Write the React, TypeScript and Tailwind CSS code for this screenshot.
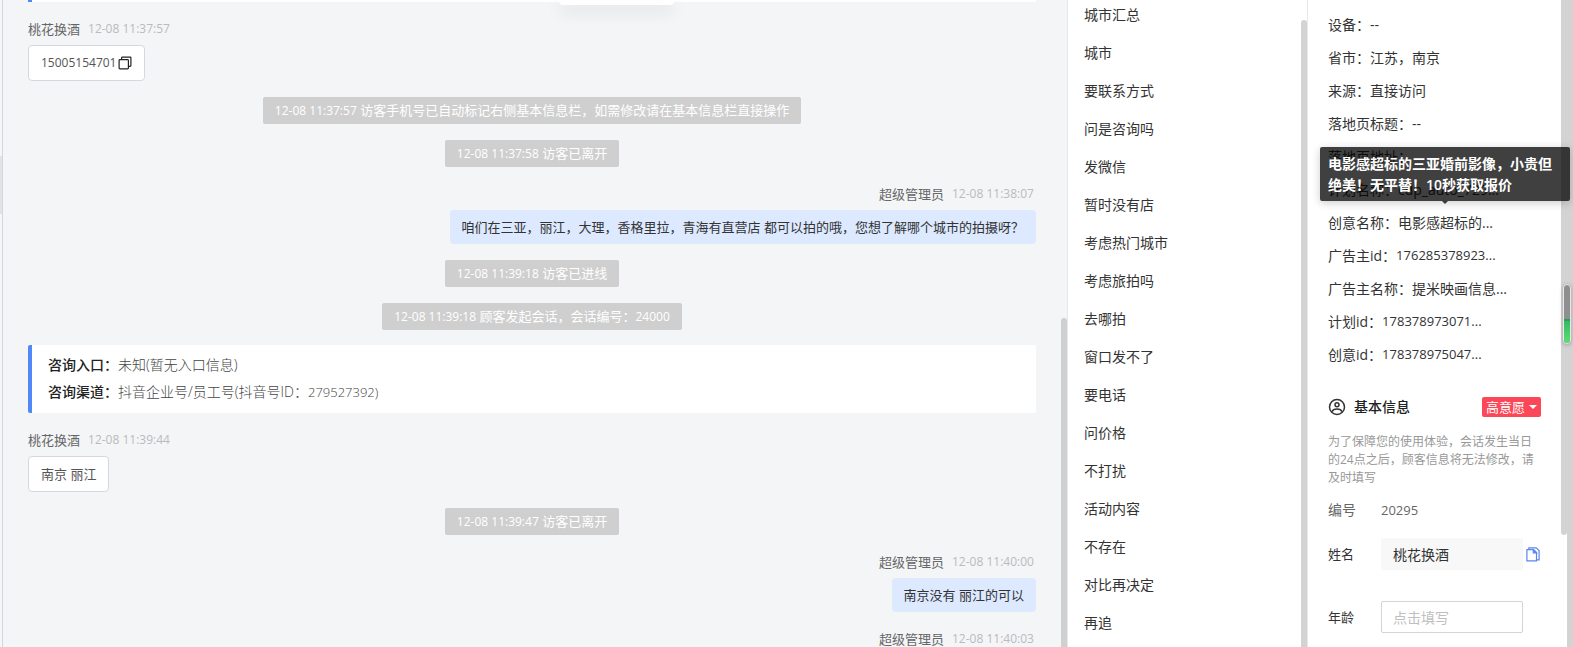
import { Fragment } from "react";

type ChatItem =
  | { kind: "notice"; time: string; text: string; number?: string }
  | { kind: "entry" }
  | { kind: "message"; from: "visitor" | "admin"; name: string; time: string; text?: string; phone?: string };

const chatItems: ChatItem[] = [
  { kind: "message", from: "visitor", name: "桃花换酒", time: "12-08 11:37:57", phone: "15005154701" },
  {
    kind: "notice",
    time: "12-08 11:37:57",
    text: "访客手机号已自动标记右侧基本信息栏，如需修改请在基本信息栏直接操作",
  },
  { kind: "notice", time: "12-08 11:37:58", text: "访客已离开" },
  {
    kind: "message",
    from: "admin",
    name: "超级管理员",
    time: "12-08 11:38:07",
    text: "咱们在三亚，丽江，大理，香格里拉，青海有直营店 都可以拍的哦，您想了解哪个城市的拍摄呀？",
  },
  { kind: "notice", time: "12-08 11:39:18", text: "访客已进线" },
  { kind: "notice", time: "12-08 11:39:18", text: "顾客发起会话，会话编号：", number: "24000" },
  { kind: "entry" },
  { kind: "message", from: "visitor", name: "桃花换酒", time: "12-08 11:39:44", text: "南京 丽江" },
  { kind: "notice", time: "12-08 11:39:47", text: "访客已离开" },
  { kind: "message", from: "admin", name: "超级管理员", time: "12-08 11:40:00", text: "南京没有 丽江的可以" },
  { kind: "message", from: "admin", name: "超级管理员", time: "12-08 11:40:03" },
];

const quickReplies = [
  "城市汇总",
  "城市",
  "要联系方式",
  "问是咨询吗",
  "发微信",
  "暂时没有店",
  "考虑热门城市",
  "考虑旅拍吗",
  "去哪拍",
  "窗口发不了",
  "要电话",
  "问价格",
  "不打扰",
  "活动内容",
  "不存在",
  "对比再决定",
  "再追",
];

const visitInfo = [
  { label: "设备", value: "--" },
  { label: "省市", value: "江苏，南京" },
  { label: "来源", value: "直接访问" },
  { label: "落地页标题", value: "--" },
  { label: "落地页地址", value: "" },
  { label: "计划名称", value: "cdp_auto_729..." },
  {
    label: "创意名称",
    value: "电影感超标的...",
    tip: "电影感超标的三亚婚前影像，小贵但绝美！无平替！10秒获取报价",
  },
  { label: "广告主id", value: "176285378923...", numeric: true },
  { label: "广告主名称", value: "提米映画信息..." },
  { label: "计划id", value: "178378973071...", numeric: true },
  { label: "创意id", value: "178378975047...", numeric: true },
];

function CopyIcon() {
  return (
    <svg width="14" height="14" viewBox="0 0 14 14" fill="none" stroke="#222" strokeWidth="1.2">
      <rect x="1.1" y="3.6" width="9.3" height="9.3" rx="0.8" />
      <path d="M3.6 3.4V1.9c0-.5.3-.8.8-.8h7.7c.5 0 .8.3.8.8v7.7c0 .5-.3.8-.8.8h-1.5" />
    </svg>
  );
}

function PagesIcon() {
  return (
    <svg width="14" height="15" viewBox="0 0 14 15" fill="none" stroke="#5b86f0" strokeWidth="1.2">
      <path d="M.9 2.6h6.6l3 3v8.3H.9z" />
      <path d="M7.3 2.6v3.2h3.2z" fill="#5b86f0" />
      <path d="M2.8 2.4V.9h7.4l2.9 2.6v9.4h-2.4" />
    </svg>
  );
}

function UserIcon() {
  return (
    <svg width="18" height="18" viewBox="0 0 18 18" fill="none" stroke="#333" strokeWidth="1.5">
      <circle cx="9" cy="9" r="7.5" />
      <circle cx="9" cy="6.8" r="2" />
      <path d="M4 13.600c.7-1.700 2.600-2.500 5-2.500s4.300.8 5 2.500" />
    </svg>
  );
}

function Notice({ time, text, number }: { time: string; text: string; number?: string }) {
  return (
    <div className="h-[27px] self-center rounded-[2px] bg-[#cfcfd0] px-3 leading-[27px] text-white">
      <time className="text-xs leading-none">{time}</time> {text}
      {number && <span className="text-xs leading-none">{number}</span>}
    </div>
  );
}

function EntryCard() {
  return (
    <div className="-mt-px rounded-[2px] border-l-4 border-[#5088f7] bg-white pt-[6px] pb-[7px] pl-4 text-sm leading-[27px] text-[#444]">
      <p>
        <b className="font-medium text-[#222]">咨询入口：</b>
        <span className="font-light">未知(暂无入口信息)</span>
      </p>
      <p>
        <b className="font-medium text-[#222]">咨询渠道：</b>
        <span className="font-light">
          抖音企业号/员工号(抖音号ID：<span className="text-[13px]">279527392)</span>
        </span>
      </p>
    </div>
  );
}

function Message({ item }: { item: Extract<ChatItem, { kind: "message" }> }) {
  const isAdmin = item.from === "admin";
  return (
    <div className={isAdmin ? "flex flex-col items-end" : "flex flex-col items-start"}>
      <div className="mb-[5px] flex h-[22px] items-center gap-2 text-[#666]">
        <span>{item.name}</span>
        <time className="w-[84px] text-xs text-[#bbb]">{item.time}</time>
      </div>
      {isAdmin && item.text && (
        <div className="rounded bg-[#dce9ff] px-3 leading-[34px] text-[#333]">{item.text}</div>
      )}
      {!isAdmin && (
        <div className="flex items-center gap-0.5 rounded border border-[#d5d8e0] bg-white px-3 leading-[34px] text-[#555]">
          {item.phone ? (
            <>
              <span className="text-xs leading-[34px]">{item.phone}</span>
              <button type="button" aria-label="复制">
                <CopyIcon />
              </button>
            </>
          ) : (
            item.text
          )}
        </div>
      )}
    </div>
  );
}

export default function App() {
  return (
    <div className="flex h-screen overflow-hidden bg-white font-['Open_Sans','Noto_Sans_CJK_SC',sans-serif] text-sm text-[#333]">
      {/* collapsed session list */}
      <div className="w-[3px] shrink-0 border-r border-[#d3d6dc] bg-[#f5f6f8] pt-[156px]">
        <div className="h-[58px] bg-[#e2e3e5]" />
      </div>

      {/* conversation */}
      <main className="relative flex min-w-0 flex-1 bg-[#f3f5f7] text-[13px]">
        <div className="absolute left-[556px] top-0 h-[5px] w-[115px] rounded-b bg-white shadow-[0_6px_16px_rgba(0,0,0,0.14)]" />
        <div className="flex min-w-0 flex-1 flex-col gap-4 px-[25px]">
          <div className="h-[2px] shrink-0 border-l-4 border-[#5088f7] bg-white" />
          {chatItems.map((item, i) => (
            <Fragment key={i}>
              {item.kind === "notice" && <Notice time={item.time} text={item.text} number={item.number} />}
              {item.kind === "entry" && <EntryCard />}
              {item.kind === "message" && <Message item={item} />}
            </Fragment>
          ))}
        </div>
        <div className="w-[6px] shrink-0 pt-[318px]">
          <div className="h-full rounded-t-full bg-[#d0d0d0]" />
        </div>
      </main>

      {/* quick replies, scrolled a little past the top */}
      <aside className="flex w-[241px] shrink-0 border-x border-[#e6e8ec]">
        <ul className="-mt-1 flex-1 pl-4 leading-[38px]">
          {quickReplies.map((reply) => (
            <li key={reply}>{reply}</li>
          ))}
        </ul>
        <div className="w-[6px] pt-5">
          <div className="h-full rounded-t-full bg-[#d3d3d3]" />
        </div>
      </aside>

      {/* visitor profile */}
      <aside className="relative flex w-[265px] shrink-0">
        <div className="min-w-0 flex-1 px-5 pt-2">
          <dl className="leading-[33px]">
            {visitInfo.map((row) => (
              <div key={row.label} className="relative flex whitespace-nowrap">
                <dt>{row.label}：</dt>
                <dd className={row.numeric ? "text-[13px] leading-[33px]" : ""}>{row.value}</dd>
                {row.tip && (
                  <div
                    role="tooltip"
                    className="absolute bottom-[38px] -left-2 z-10 w-[250px] whitespace-normal rounded-[2px] bg-black/75 px-2 py-[6px] font-semibold leading-[21px] text-white shadow-[0_2px_8px_rgba(0,0,0,0.2)]"
                  >
                    {row.tip}
                    <span className="absolute top-full left-[122px] border-x-[3px] border-t-[3px] border-x-transparent border-t-black/75" />
                  </div>
                )}
              </div>
            ))}
          </dl>

          <div className="mt-[26px] flex h-5 items-center">
            <UserIcon />
            <h2 className="ml-2 font-medium text-[#222]">基本信息</h2>
            <button
              type="button"
              className="ml-auto flex h-5 items-center gap-1 rounded-[2px] bg-[#fb4757] px-1 text-[13px] text-white"
            >
              高意愿
              <span className="border-x-4 border-t-4 border-x-transparent border-t-white" />
            </button>
          </div>

          <p className="mt-4 text-xs leading-[18px] text-[#999]">
            为了保障您的使用体验，会话发生当日的24点之后，顾客信息将无法修改，请及时填写
          </p>

          <div className="mt-[13px] flex h-5 items-center text-[#666]">
            <span className="w-[53px]">编号</span>
            <span className="text-[13px]">20295</span>
          </div>
          <div className="mt-[18px] flex items-center">
            <label htmlFor="name" className="w-[53px] text-[13px]">
              姓名
            </label>
            <input id="name" defaultValue="桃花换酒" className="h-8 w-[142px] rounded-[2px] bg-[#f8f8f8] px-3" />
            <button type="button" aria-label="复制姓名" className="ml-[3px]">
              <PagesIcon />
            </button>
          </div>
          <div className="mt-[31px] flex items-center">
            <label htmlFor="age" className="w-[53px] text-[13px]">
              年龄
            </label>
            <input
              id="age"
              placeholder="点击填写"
              className="h-8 w-[142px] rounded-[2px] border border-[#d4d4d4] px-[11px] placeholder:text-[#bfbfbf]"
            />
          </div>
        </div>
        <div className="h-[535px] w-[6px] rounded-b-full bg-[#d3d3d3]" />
        <div className="w-[6px] bg-[#d3d3d3]" />
        {/* floating volume meter */}
        <div className="absolute top-[284px] right-[2px] flex h-[60px] w-2 flex-col overflow-hidden rounded-full border border-[#e8e8e8] bg-[#8f8f8f] shadow-[0_1px_4px_rgba(0,0,0,0.25)]">
          <div className="mt-auto h-6 border-t-2 border-[#2e9e57] bg-linear-to-b from-[#35b865] to-[#5be070]" />
        </div>
      </aside>
    </div>
  );
}
